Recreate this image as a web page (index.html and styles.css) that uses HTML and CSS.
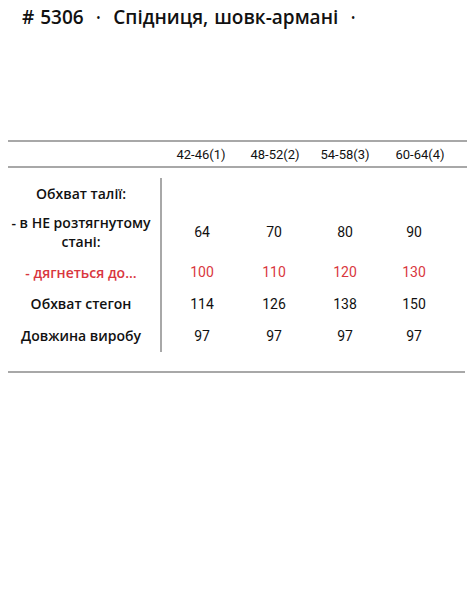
FILE: index.html
```html
<!DOCTYPE html>
<html lang="uk">
<head>
  <meta charset="UTF-8">
  <meta name="viewport" content="width=device-width, initial-scale=1.0">
  <title>Спідниця, шовк-армані</title>
  <link rel="stylesheet" href="styles.css">
</head>
<body>

  <h1 class="title"># 5306 <span class="dot">•</span> Спідниця, шовк-армані <span class="dot">•</span></h1>

  <div class="sizes">
    <!-- Header -->
    <div class="sizes-head">
      <div></div>
      <div>42-46(1)</div>
      <div>48-52(2)</div>
      <div>54-58(3)</div>
      <div>60-64(4)</div>
    </div>

    <div class="sizes-body">
      <div class="labels">
        <div>Обхват талії:</div>
        <div>- в НЕ розтягнутому<br>стані:</div>
        <div class="red">- дягнеться до...</div>
        <div>Обхват стегон</div>
        <div>Довжина виробу</div>
      </div>
      <div class="values">
        <div></div><div></div><div></div><div></div>
        <div>64</div><div>70</div><div>80</div><div>90</div>
        <div class="red">100</div><div class="red">110</div><div class="red">120</div><div class="red">130</div>
        <div>114</div><div>126</div><div>138</div><div>150</div>
        <div>97</div><div>97</div><div>97</div><div>97</div>
      </div>
    </div>

    <div class="sizes-foot"></div>
  </div>

</body>
</html>
```

FILE: styles.css
```css
/* General Styles */
* {
  box-sizing: border-box;
  margin: 0;
  padding: 0;
}

body {
  font-family: Roboto, Arial, sans-serif;
  background-color: #fff;
  color: #111;
}

/* Title */
.title {
  font-family: "Open Sans", Arial, sans-serif;
  font-size: 19px;
  font-weight: 600;
  padding: 6px 0 0 22px;
  line-height: 22px;
  word-spacing: 1px;
}

.title .dot {
  font-size: 10px;
  margin: 0 7px;
  vertical-align: 3px;
}

/* Size table */
.sizes {
  margin: 112px 5px 0 8px;
  font-size: 13px;
}

.sizes-head {
  display: grid;
  grid-template-columns: 152px 82px 66px 74px 76px;
  height: 28px;
  align-items: center;
  text-align: center;
  border-top: 2px solid #a8a8a8;
  border-bottom: 2px solid #a8a8a8;
}

.sizes-body {
  display: flex;
  margin-top: 10px;
}

.labels,
.values {
  display: grid;
  grid-template-rows: 30px 48px 32px 31px 33px;
  align-items: center;
  text-align: center;
}

.labels {
  width: 152px;
  padding-right: 6px;
  font-family: "Open Sans", Arial, sans-serif;
  font-size: 14px;
  font-weight: 600;
  line-height: 19px;
}

.values {
  grid-template-columns: 80px 64px 78px 60px;
  border-left: 2px solid #a8a8a8;
  font-size: 14px;
}

.red {
  color: #d9363e;
}

.sizes-foot {
  margin: 19px 2px 0 0;
  border-top: 2px solid #a8a8a8;
}
```
